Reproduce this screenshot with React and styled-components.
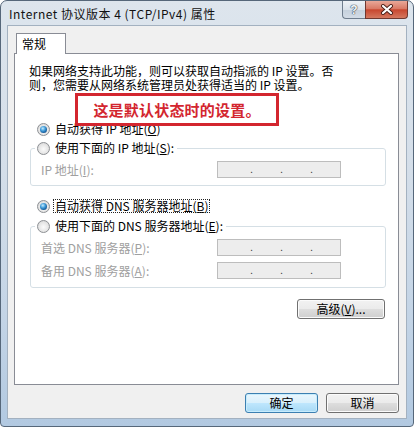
import React from 'react';
import styled, { createGlobalStyle } from 'styled-components';

const Global = createGlobalStyle`
  html, body { margin: 0; padding: 0; background: #fff; }
  body {
    font-family: "Noto Sans CJK SC", "Liberation Sans", sans-serif;
    font-size: 12px;
    color: #000;
  }
  * { box-sizing: border-box; }
`;

const Window = styled.div`
  width: 414px;
  height: 427px;
  border: 1px solid #56677a;
  border-radius: 7px 7px 4px 4px;
  background: linear-gradient(180deg, #dde5ed 0%, #d4dee9 40%, #c3d4e6 75%, #b2c9e1 100%);
  display: flex;
  flex-direction: column;
  overflow: hidden;
`;

const TitleBar = styled.div`
  height: 24px;
  flex-shrink: 0;
  display: flex;
  align-items: flex-start;
  padding-left: 8px;
`;

const Title = styled.div`
  margin-top: 6px;
  line-height: 14px;
  font-size: 12px;
  letter-spacing: 0.5px;
  color: #111;
`;

const Caption = styled.div`
  margin-left: auto;
  margin-right: 5px;
  display: flex;
`;

const HelpBtn = styled.div`
  width: 23px;
  height: 18px;
  border: 1px solid #6f7d8d;
  border-top: none;
  border-right: none;
  border-radius: 0 0 0 4px;
  background: linear-gradient(180deg, #eef2f6 0%, #dae2ea 50%, #c5d0dc 51%, #d3dce6 100%);
  display: flex;
  align-items: center;
  justify-content: center;
  font-family: "Liberation Sans", sans-serif;
  font-weight: bold;
  font-size: 12px;
  color: #f5f7f9;
  text-shadow: 0 0 1px #3b4858, 0 0 1px #3b4858, 0 0 1px #3b4858;
`;

const CloseBtn = styled.div`
  width: 43px;
  height: 18px;
  border: 1px solid #70382f;
  border-top: none;
  border-radius: 0 0 4px 0;
  background: linear-gradient(180deg, #e9a898 0%, #d97a66 45%, #c8472f 52%, #d5785f 100%);
  display: flex;
  align-items: center;
  justify-content: center;
`;

const Client = styled.div`
  margin: 0 6px;
  height: 394px;
  flex-shrink: 0;
  border: 1px solid #a3b1c0;
  background: #f0f0f0;
  padding: 7px 7px 0 6px;
  display: flex;
  flex-direction: column;
`;

const TabStrip = styled.div`
  display: flex;
  padding-left: 2px;
  position: relative;
  z-index: 1;
`;

const Tab = styled.div`
  width: 50px;
  height: 21px;
  margin-bottom: -1px;
  border: 1px solid #898c95;
  border-bottom: none;
  background: #fff;
  padding: 0 5px;
  line-height: 19px;
  font-size: 12px;
`;

const Panel = styled.div`
  position: relative;
  height: 332px;
  border: 1px solid #898c95;
  background: #fff;
  padding: 10px 12px 0 14px;
  display: flex;
  flex-direction: column;
`;

const Intro = styled.div`
  display: flex;
  flex-direction: column;
`;

const IntroLine = styled.div`
  height: 14px;
  line-height: 14px;
  font-size: 12px;
  white-space: nowrap;
`;

const Note = styled.div`
  position: absolute;
  left: 60px;
  top: 39px;
  width: 204px;
  height: 33px;
  border: 3px solid #d3262f;
  background: #fff;
  display: flex;
  align-items: center;
  justify-content: center;
  color: #d3262f;
  font-weight: bold;
  font-size: 15px;
  letter-spacing: 0.2px;
`;

const RadioRow = styled.div`
  display: flex;
  align-items: center;
  height: 18px;
  gap: 4px;
  margin-top: ${p => p.$top || 0}px;
  padding-left: 8px;
`;

const Radio = styled.span`
  width: 13px;
  height: 13px;
  flex-shrink: 0;
  border-radius: 50%;
  border: 1px solid #8d9094;
  background: radial-gradient(circle at 50% 55%, #fbfbfb 0%, #e6e6e6 55%, #cdcdcd 100%);
  display: flex;
  align-items: center;
  justify-content: center;
  &::after {
    content: '';
    display: ${p => (p.$checked ? 'block' : 'none')};
    width: 7px;
    height: 7px;
    border-radius: 50%;
    background: radial-gradient(circle at 40% 35%, #c4ecff 0%, #3f9ad8 40%, #125593 75%, #0b3d6e 100%);
  }
`;

const RadioText = styled.span`
  line-height: 12px;
  font-size: 12px;
  padding: 0 1px;
  outline: ${p => (p.$focus ? '1px dotted #222' : 'none')};
`;

const Key = styled.span`
  text-decoration: underline;
  text-underline-offset: 1px;
`;

const Group = styled.fieldset`
  margin: ${p => p.$top || 0}px 0 0 1px;
  border: 1px solid #d5dfe5;
  border-radius: 3px;
  padding: 0 0 ${p => p.$bottom || 7}px 0;
  min-width: 0;
`;

const Legend = styled.legend`
  margin-left: 4px;
  padding: 0 2px;
  height: 18px;
`;

const LegendInner = styled.span`
  display: flex;
  align-items: center;
  height: 18px;
  gap: 4px;
`;

const FieldRow = styled.div`
  display: flex;
  align-items: center;
  height: 18px;
  padding-left: 10px;
  margin-top: ${p => p.$top || 0}px;
`;

const FieldLabel = styled.span`
  width: 176px;
  flex-shrink: 0;
  color: #a0a0a0;
  font-size: 12px;
`;

const IpBox = styled.div`
  width: 124px;
  height: 17px;
  border: 1px solid #bdbdbd;
  background: #ededed;
  display: flex;
  justify-content: space-between;
  align-items: flex-end;
  padding: 0 27px 1px 32px;
  font-family: "Liberation Sans", sans-serif;
  font-size: 11px;
  line-height: 13px;
  color: #444;
`;

const ButtonBase = styled.button`
  font-family: "Noto Sans CJK SC", "Liberation Sans", sans-serif;
  font-size: 12px;
  color: #000;
  height: 20px;
  padding: 0;
  border-radius: 3px;
  cursor: default;
  line-height: 16px;
`;

const PlainButton = styled(ButtonBase)`
  width: ${p => p.$w}px;
  border: 1px solid #707070;
  background: linear-gradient(180deg, #f2f2f2 0%, #ebebeb 48%, #dddddd 52%, #cfcfcf 100%);
  box-shadow: inset 0 0 0 1px #fbfbfb;
`;

const DefaultButton = styled(ButtonBase)`
  width: ${p => p.$w}px;
  border: 1px solid #3c7fb1;
  background: linear-gradient(180deg, #eaf6fd 0%, #d9f0fc 48%, #bee6fd 52%, #a7d9f5 100%);
  box-shadow: inset 0 0 0 1px #c7ecfc;
`;

const AdvancedRow = styled.div`
  display: flex;
  justify-content: flex-end;
  margin-top: 11px;
  padding-right: 1px;
`;

const DialogButtons = styled.div`
  display: flex;
  justify-content: flex-end;
  gap: 8px;
  margin-top: 8px;
`;

function IpField() {
  return (
    <IpBox>
      <span>.</span>
      <span>.</span>
      <span>.</span>
    </IpBox>
  );
}

export default function App() {
  return (
    <>
      <Global />
      <Window>
        <TitleBar>
          <Title>Internet 协议版本 4 (TCP/IPv4) 属性</Title>
          <Caption>
            <HelpBtn>?</HelpBtn>
            <CloseBtn>
              <svg width="14" height="11" viewBox="0 0 14 11">
                <path d="M3 2 L11 9 M11 2 L3 9" stroke="#4a1f18" strokeWidth="4" strokeLinecap="round" />
                <path d="M3 2 L11 9 M11 2 L3 9" stroke="#ffffff" strokeWidth="2.2" strokeLinecap="round" />
              </svg>
            </CloseBtn>
          </Caption>
        </TitleBar>
        <Client>
          <TabStrip>
            <Tab>常规</Tab>
          </TabStrip>
          <Panel>
            <Intro>
              <IntroLine>如果网络支持此功能，则可以获取自动指派的 IP 设置。否</IntroLine>
              <IntroLine>则，您需要从网络系统管理员处获得适当的 IP 设置。</IntroLine>
            </Intro>
            <Note>这是默认状态时的设置。</Note>
            <RadioRow $top={28}>
              <Radio $checked />
              <RadioText>自动获得 IP 地址(<Key>O</Key>)</RadioText>
            </RadioRow>
            <Group $top={1} $bottom={7}>
              <Legend>
                <LegendInner>
                  <Radio />
                  <RadioText>使用下面的 IP 地址(<Key>S</Key>):</RadioText>
                </LegendInner>
              </Legend>
              <FieldRow $top={3}>
                <FieldLabel>IP 地址(<Key>I</Key>):</FieldLabel>
                <IpField />
              </FieldRow>
            </Group>
            <RadioRow $top={11}>
              <Radio $checked />
              <RadioText $focus>自动获得 DNS 服务器地址(<Key>B</Key>)</RadioText>
            </RadioRow>
            <Group $top={2} $bottom={8}>
              <Legend>
                <LegendInner>
                  <Radio />
                  <RadioText>使用下面的 DNS 服务器地址(<Key>E</Key>):</RadioText>
                </LegendInner>
              </Legend>
              <FieldRow $top={3}>
                <FieldLabel>首选 DNS 服务器(<Key>P</Key>):</FieldLabel>
                <IpField />
              </FieldRow>
              <FieldRow $top={5}>
                <FieldLabel>备用 DNS 服务器(<Key>A</Key>):</FieldLabel>
                <IpField />
              </FieldRow>
            </Group>
            <AdvancedRow>
              <PlainButton $w={88}>高级(<Key>V</Key>)...</PlainButton>
            </AdvancedRow>
          </Panel>
          <DialogButtons>
            <DefaultButton $w={73}>确定</DefaultButton>
            <PlainButton $w={73}>取消</PlainButton>
          </DialogButtons>
        </Client>
      </Window>
    </>
  );
}
